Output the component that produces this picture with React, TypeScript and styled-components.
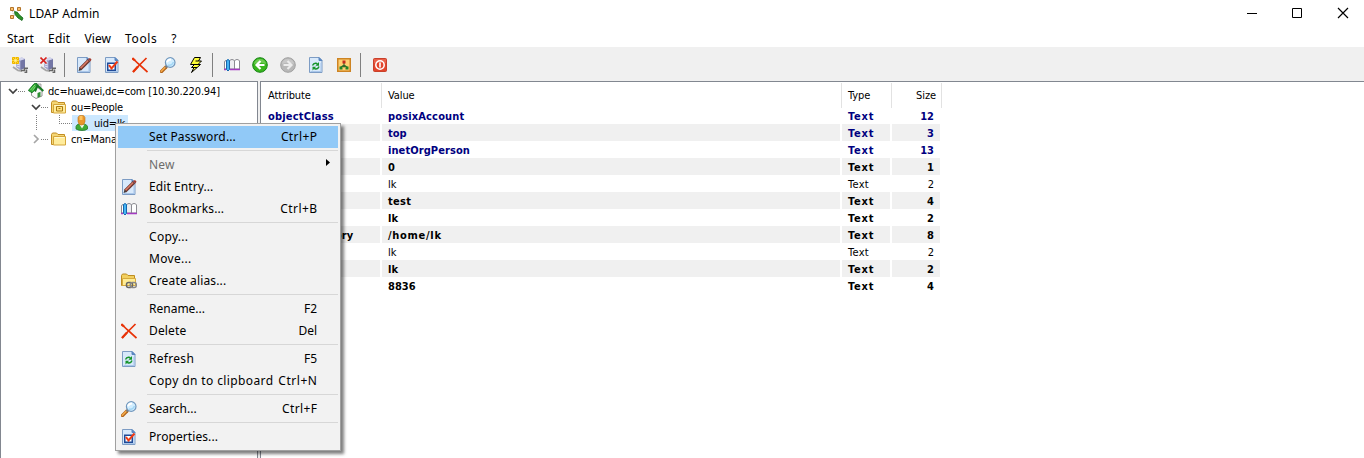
import React from 'react';
import styled, { createGlobalStyle } from 'styled-components';

const GlobalStyle = createGlobalStyle`
  html, body { margin: 0; padding: 0; background: #fff; }
  * { box-sizing: border-box; }
`;

const uiFont = `'Noto Sans', 'Open Sans', sans-serif`;
const gridFont = `'DejaVu Sans Condensed', 'DejaVu Sans', sans-serif`;

const Window = styled.div`
  position: relative;
  width: 1364px;
  height: 458px;
  overflow: hidden;
  display: flex;
  flex-direction: column;
  background: #fff;
  color: #000;
  font: 12px/16px ${uiFont};
  white-space: pre;
`;

const TitleBar = styled.header`
  display: flex;
  align-items: center;
  height: 28px;
  padding: 0 11px 0 9px;
`;

const TitleText = styled.div`
  flex: 1;
  margin-left: 4px;
  letter-spacing: 0.1px;
`;

const WindowButtons = styled.div`
  display: flex;
  gap: 30px;
  svg { display: block; }
`;

const MenuBar = styled.nav`
  display: flex;
  align-items: center;
  gap: 14px;
  height: 19px;
  padding: 2px 0 0 7px;
`;

const MenuTitle = styled.span<{ $ls?: number }>`
  letter-spacing: ${(p) => p.$ls ?? 0}px;
  line-height: 17px;
`;

const ToolBar = styled.div`
  display: flex;
  align-items: center;
  height: 34px;
  padding: 2px 0 0 6px;
  background: #f0f0f0;
`;

const ToolButton = styled.div`
  display: flex;
  justify-content: center;
  width: 28px;
`;

const ToolSeparator = styled.div`
  width: 8px;
  height: 24px;
  padding-left: 2px;
  &::before {
    content: '';
    display: block;
    width: 1px;
    height: 24px;
    background: #808080;
  }
`;

const Panes = styled.main`
  display: flex;
  flex: 1;
  gap: 2px;
  background: #f0f0f0;
`;

const TreePane = styled.section`
  width: 258px;
  padding: 1px 0 0;
  border: solid #828790;
  border-width: 1px 1px 0 1px;
  background: #fff;
  font: 11px/16px ${gridFont};
`;

const TreeRow = styled.div<{ $indent: number }>`
  display: flex;
  align-items: center;
  height: 16px;
  padding-left: ${(p) => p.$indent}px;
`;

const TreeLabel = styled.span<{ $selected?: boolean }>`
  display: flex;
  align-items: center;
  height: 16px;
  gap: 4px;
  padding: 0 3px 0 2px;
  background: ${(p) => (p.$selected ? '#cce8ff' : 'transparent')};
`;

const TreeText = styled.span`
  padding-top: 1px;
  letter-spacing: -0.16px;
`;

const ListPane = styled.section`
  flex: 1;
  padding-top: 1px;
  border: solid #828790;
  border-width: 1px 0 0 1px;
  background: #fff;
  font: 11px/17px ${gridFont};
`;

const columns = '120px 460px 50px 50px';

const HeaderRow = styled.div`
  display: grid;
  grid-template-columns: ${columns};
  height: 24px;
  margin-left: 1px;
`;

const HeaderCell = styled.div<{ $right?: boolean }>`
  padding: 0 5px 0 6px;
  line-height: 25px;
  border-right: 1px solid #e2e2e2;
  text-align: ${(p) => (p.$right ? 'right' : 'left')};
  letter-spacing: -0.1px;
`;

const ListRow = styled.div<{ $kind: Kind }>`
  display: grid;
  grid-template-columns: ${columns};
  height: 17px;
  margin-left: 1px;
  font-weight: ${(p) => (p.$kind === 'optional' ? 400 : 700)};
  color: ${(p) => (p.$kind === 'class' ? '#000080' : '#000')};
  &:nth-child(odd) > div { background: #f0f0f0; }
`;

const Cell = styled.div<{ $right?: boolean; $ls?: number }>`
  margin-right: 2px;
  padding: 0 6px;
  line-height: 19px;
  height: 17px;
  text-align: ${(p) => (p.$right ? 'right' : 'left')};
  letter-spacing: ${(p) => p.$ls ?? 0}px;
`;

const ContextMenu = styled.div`
  position: absolute;
  left: 115px;
  top: 123px;
  width: 226px;
  height: 328px;
  padding: 2px;
  border: 1px solid #a0a0a0;
  background: #f2f2f2;
  box-shadow: 3px 3px 3px rgba(0, 0, 0, 0.5);
`;

const MenuItem = styled.div<{ $active?: boolean; $disabled?: boolean }>`
  display: flex;
  align-items: center;
  height: 22px;
  padding-left: 3px;
  padding-right: 21px;
  background: ${(p) => (p.$active ? '#91c9f7' : 'transparent')};
  color: ${(p) => (p.$disabled ? '#6d6d6d' : '#000')};
`;

const MenuIcon = styled.span`
  width: 28px;
  height: 16px;
  svg { display: block; }
`;

const MenuLabel = styled.span<{ $ls?: number }>`
  flex: 1;
  letter-spacing: ${(p) => p.$ls ?? 0.15}px;
`;

const Shortcut = styled.span<{ $ls?: number }>`
  letter-spacing: ${(p) => p.$ls ?? 0}px;
  margin-right: ${(p) => -(p.$ls ?? 0)}px;
`;

const SubmenuArrow = styled.svg`
  display: block;
  margin: -4px -14px 0 0;
`;

const MenuSeparator = styled.div`
  height: 6px;
  padding: 2px 0 0 29px;
  &::before {
    content: '';
    display: block;
    height: 1px;
    background: #d7d7d7;
  }
`;

const Icon = ({ children }: { children: React.ReactNode }) => (
  <svg width="16" height="16" viewBox="0 0 16 16" fill="none">{children}</svg>
);

const Page = () => (
  <>
    <path d="M1.500.500h9.500l3 3v12h-12.500z" fill="#d8e9fb" stroke="#7d9cc4" />
    <path d="M2.500 14.500h10.500V6" stroke="#a9c6ea" />
    <path d="M11 .500v3h3z" fill="#5b86c0" stroke="#5b86c0" />
  </>
);

const Server = () => (
  <>
    <path d="M4 2l6-1.500 3 1.500v9l-5 2-4-3z" fill="#a3a5cc" />
    <path d="M8.500 3.500L13 2v9l-4.500 2z" fill="#7376a5" />
    <path d="M4 2l6-1.500L13 2l-4.500 1.500z" fill="#d3d5ee" />
    <path d="M4.500 5l3.500 1M4.500 7l3.500 1M4.500 9l3.500 1" stroke="#dfe2f6" />
    <path d="M1 10l5 3.500 4 .5" stroke="#a6a6a6" strokeWidth="1.800" />
    <path d="M9 13.500h3.500v-2.200H16M12.500 15.500h2v-3" stroke="#666" strokeWidth="1.500" />
  </>
);

const ConnectIcon = () => (
  <Icon>
    <Server />
    <path d="M0 0h7v7H0z" fill="#eeb400" />
    <path d="M3.500 0v7M0 3.500h7M.5.5l6 6M6.500.5l-6 6" stroke="#ffd93b" />
    <path d="M2.500 2.500h2v2h-2z" fill="#fff3a0" />
  </Icon>
);

const DisconnectIcon = () => (
  <Icon>
    <Server />
    <path d="M0 .5h7v6H0z" fill="#f0f0f0" opacity=".7" />
    <path d="M.5.5l6 6M6.500.5l-6 6" stroke="#d8201c" strokeWidth="1.600" />
  </Icon>
);

const EditIcon = () => (
  <Icon>
    <Page />
    <path d="M4.200 12L13 3.200" stroke="#6d352d" strokeWidth="3.400" />
    <path d="M4.500 11.200L12.200 3.500" stroke="#d97a66" strokeWidth="1.600" />
    <path d="M12 2l2-1 1.500 1.500-1 2z" fill="#a33d32" />
    <path d="M2.500 14l1-3.200 2.300 2.200z" fill="#413c3c" />
  </Icon>
);

const PropertiesIcon = () => (
  <Icon>
    <Page />
    <path d="M3.750 6.250h7.500v7h-7.500z" fill="#fff" stroke="#1f4a98" strokeWidth="1.500" />
    <path d="M5 8l2.500 3.500L13.500 4.500" stroke="#f03a12" strokeWidth="2" />
  </Icon>
);

const DeleteIcon = () => (
  <Icon>
    <path d="M.5 1l5.500 5.500L15.500 15" stroke="#e83308" strokeWidth="1.700" />
    <path d="M.3 1.300L3 3.500" stroke="#e83308" strokeWidth="2.200" />
    <path d="M14.500 1L7.500 8 1 15" stroke="#e83308" strokeWidth="1.700" />
    <path d="M6 9.500L1 15" stroke="#e83308" strokeWidth="2.200" />
  </Icon>
);

const SearchIcon = () => (
  <Icon>
    <path d="M6 10L1.500 14.500" stroke="#b2641b" strokeWidth="3.200" strokeLinecap="round" />
    <path d="M5.500 10L1.300 14.200" stroke="#f6ac4a" strokeWidth="1.600" strokeLinecap="round" />
    <path d="M6.800 9.200L5.500 10.500" stroke="#777" strokeWidth="2.200" />
    <circle cx="10.200" cy="5.500" r="4.800" fill="#d2eeff" stroke="#7197bd" strokeWidth="1.200" />
    <path d="M7 5.200Q8 2.500 11 2.500" stroke="#fff" strokeWidth="1.800" />
    <path d="M8 8Q12 9 13.500 5" stroke="#a1d6f5" strokeWidth="1.400" />
  </Icon>
);

const LightningIcon = () => (
  <Icon>
    <path d="M6.500.5h6l-2 3.500h3L10 7.500h2.500L3.500 15.500l2.500-5H3.500l3-3H2.500z" fill="#ffff38" stroke="#000" strokeLinejoin="bevel" />
    <path d="M6 7.500h4M10.500 4h-3M6 10.500h3" stroke="#000" />
  </Icon>
);

const BookIcon = () => (
  <Icon>
    <path d="M.5 12V5q0-1.500 2-1.500V12z" fill="#fff" stroke="#8b8b91" />
    <path d="M5.500 12V4q.5-1.500 2.500-1.500T10.500 4v8z" fill="#ededf0" stroke="#8b8b91" />
    <path d="M10.500 12V4q.5-1.500 2.500-1.500T15.500 4v8z" fill="#fff" stroke="#8b8b91" />
    <path d="M2.500 3.500q1.500-2 3 0v9L4 14l-1.500-1.500z" fill="#45b4f2" stroke="#1566ae" />
    <path d="M0 12.500h2M6 12.500h10" stroke="#a53ac2" strokeWidth="1.600" />
  </Icon>
);

const ArrowIcon = ({ disabled, back }: { disabled?: boolean; back?: boolean }) => (
  <Icon>
    <circle cx="8" cy="8" r="7.300" fill={disabled ? '#b8b8b8' : '#38b51d'} stroke={disabled ? '#a0a0a0' : '#168514'} />
    <path d="M2 7a6 5 0 0 1 12 0q-6-3-12 0" fill={disabled ? '#c8c8c8' : '#6bcb50'} />
    <path
      d={back ? 'M12.500 8H5M8.500 4L4.500 8l4 4' : 'M3.500 8H11M7.500 4l4 4-4 4'}
      stroke={disabled ? '#ececec' : '#fff'}
      strokeWidth="2.200"
    />
  </Icon>
);

const RefreshIcon = () => (
  <Icon>
    <Page />
    <path d="M4.500 8.500q1-2.500 3.500-2.200l1.500.7M11 9.500q-1 2.700-3.500 2.500L6 11.300" stroke="#16942b" strokeWidth="1.400" />
    <path d="M11 5v3.700H7.500z" fill="#16942b" />
    <path d="M4.500 13.500V9.800h3.700z" fill="#16942b" />
  </Icon>
);

const SchemaIcon = () => (
  <Icon>
    <path d="M1.750 1.750h12.500v12.500H1.750z" fill="#ffcf72" stroke="#cd8423" strokeWidth="1.500" />
    <path d="M8 5v3M4.500 10.500L8 8l3.500 2.500M8 8v2.500" stroke="#35692b" strokeWidth="1.200" />
    <path d="M6.500 3.500h3v3h-3z" fill="#c22b1e" />
    <path d="M3.500 9.500h3v3h-3zM9.500 9.500h3v3h-3z" fill="#218426" />
  </Icon>
);

const ExitIcon = () => (
  <Icon>
    <rect x="1.500" y="1.500" width="13" height="13" rx="1" fill="#e2452c" stroke="#c9402a" />
    <path d="M2 2h12v4H2z" fill="#ea6049" />
    <circle cx="8" cy="8" r="4.200" stroke="#fff" strokeWidth="1.500" />
    <path d="M8 5.500v5" stroke="#fff" strokeWidth="1.600" />
  </Icon>
);

const FolderShape = () => (
  <>
    <path d="M.5 3.500l1-1.500h4l1.500 1.500h6.500v10H.5z" fill="#f4d675" stroke="#c18c22" />
    <path d="M2.500 5.500h12v8.500h-12z" fill="#ffec9c" stroke="#d5a63a" />
    <path d="M3.500 6.500h10" stroke="#fff8cf" />
  </>
);

const FolderIcon = () => <Icon><FolderShape /></Icon>;

const UnitIcon = () => (
  <Icon>
    <FolderShape />
    <path d="M5.500 7.500h6v4.500h-6z" fill="#ffe17a" stroke="#a97b14" />
    <path d="M7.500 9.500h2" stroke="#a97b14" />
  </Icon>
);

const AliasIcon = () => (
  <Icon>
    <path d="M.5 2.500l1-1.500h4l1.500 1.500h6.500v10H.5z" fill="#f2cf5e" stroke="#bd8c1f" />
    <path d="M1.500 5.500h13v7h-13z" fill="#ffec94" stroke="#d6aa3e" />
    <rect x="5.500" y="9.500" width="6" height="5" rx="2" stroke="#666" strokeWidth="1.500" />
    <rect x="9.300" y="9.500" width="6" height="5" rx="2" stroke="#888" strokeWidth="1.500" />
  </Icon>
);

const HomeIcon = () => (
  <Icon>
    <path d="M10 1h3v4h-3z" fill="#e4e4e4" stroke="#8a8a8a" strokeWidth=".7" />
    <path d="M3.500 8v4.500L8 15.500l6-2.500V8L9 4z" fill="#fafafa" stroke="#777" strokeWidth=".8" />
    <path d="M9.500 10l3-1.200v4.800l-3 1.200z" fill="#2f8f35" />
    <path d="M.3 7.500L6 .8 9 .3 7 7 4 9.800z" fill="#2fae35" stroke="#0b681a" strokeWidth=".8" />
    <path d="M7 8.500L9.500 2.500 15.300 8" stroke="#157a22" strokeWidth="2" />
    <path d="M2.500 7l4.500-5M4.500 7.500l3-4" stroke="#85e076" />
  </Icon>
);

const UserIcon = () => (
  <Icon>
    <path d="M2 14v-2.500q.5-2 3-2.500h5q3 .5 3.500 2.500V14q-2 1.500-5.500 1.500T2 14z" fill="#3eab35" stroke="#257728" strokeWidth=".8" />
    <path d="M5.500 9.500L8 13.500l2.500-4z" fill="#f4f4e8" />
    <path d="M4 2.500Q4.500.3 7.500.3T11 2.500v4Q10.500 10 7.500 10T4 6.500z" fill="#e9962c" stroke="#c0731a" strokeWidth=".6" />
    <path d="M5.500 2h3M5.500 4h3" stroke="#ffc45e" strokeWidth="1.800" />
  </Icon>
);

const AppIcon = () => (
  <Icon>
    <path d="M3 3l2 8M4 3l9 9M11 3L4 11" stroke="#b9b9b9" strokeDasharray="1 1" />
    <path d="M1.500 1.500h3v3h-3zM8.500 1.500h3v3h-3zM1.500 9.500h3v3h-3z" fill="#f9bf6a" stroke="#b3742a" />
    <path d="M5.500 5.500q3.500 0 4.500 3l4 3.500-1 2.500-4-2.500-3-3.500z" fill="#2c9028" stroke="#116416" strokeWidth=".8" />
  </Icon>
);

const Expander = ({ open }: { open: boolean }) => (
  <svg width="10" height="10" viewBox="0 0 10 10" fill="none">
    <path d={open ? 'M1 3l4 4 4-4' : 'M3 1l4 4-4 4'} stroke={open ? '#404040' : '#a6a6a6'} strokeWidth="1.700" />
  </svg>
);

const Dots = ({ width, corner }: { width: number; corner?: boolean }) => (
  <svg width={width} height="16" fill="none" shapeRendering="crispEdges">
    <path d={corner ? `M.5 0v8M0 8.500h${width}` : `M0 8.500h${width}`} stroke="#808080" strokeDasharray="1 1" />
  </svg>
);

const Guide = styled.svg`
  margin-right: 22px;
`;

type Kind = 'class' | 'required' | 'optional';

const entries: [string, string, string, Kind, number?][] = [
  ['objectClass', 'posixAccount', '12', 'class', 0.15],
  ['', 'top', '3', 'class'],
  ['', 'inetOrgPerson', '13', 'class', 0.08],
  ['gidNumber', '0', '1', 'required'],
  ['givenName', 'lk', '2', 'optional'],
  ['sn', 'test', '4', 'required', 0.3],
  ['cn', 'lk', '2', 'required'],
  ['homeDirectory', '/home/lk', '8', 'required', 0.7],
  ['initials', 'lk', '2', 'optional'],
  ['uid', 'lk', '2', 'required'],
  ['uidNumber', '8836', '4', 'required'],
];

type Item = {
  label: string;
  ls?: number;
  keys?: string;
  kls?: number;
  icon?: React.ReactNode;
  active?: boolean;
  disabled?: boolean;
};

const menuGroups: Item[][] = [
  [{ label: 'Set Password...', keys: 'Ctrl+P', kls: 0.4, active: true }],
  [
    { label: 'New', disabled: true },
    { label: 'Edit Entry...', ls: 0.08, icon: <EditIcon /> },
    { label: 'Bookmarks...', keys: 'Ctrl+B', kls: 0.4, icon: <BookIcon /> },
  ],
  [
    { label: 'Copy...', ls: 0.3 },
    { label: 'Move...', ls: 0.3 },
    { label: 'Create alias...', icon: <AliasIcon /> },
  ],
  [
    { label: 'Rename...', ls: 0, keys: 'F2' },
    { label: 'Delete', keys: 'Del', icon: <DeleteIcon /> },
  ],
  [
    { label: 'Refresh', ls: 0.3, keys: 'F5', icon: <RefreshIcon /> },
    { label: 'Copy dn to clipboard', ls: 0.39, keys: 'Ctrl+N', kls: 0.55 },
  ],
  [{ label: 'Search...', ls: 0, keys: 'Ctrl+F', kls: 0.4, icon: <SearchIcon /> }],
  [{ label: 'Properties...', ls: 0.08, icon: <PropertiesIcon /> }],
];

const menuTitles: [string, number][] = [
  ['Start', 0],
  ['Edit', 0.25],
  ['View', 0.1],
  ['Tools', 0.6],
  ['?', 0],
];

const toolGroups: React.ReactNode[][] = [
  [<ConnectIcon />, <DisconnectIcon />],
  [<EditIcon />, <PropertiesIcon />, <DeleteIcon />, <SearchIcon />, <LightningIcon />],
  [<BookIcon />, <ArrowIcon back />, <ArrowIcon disabled />, <RefreshIcon />, <SchemaIcon />],
  [<ExitIcon />],
];

export default function App() {
  return (
    <Window>
      <GlobalStyle />
      <TitleBar>
        <AppIcon />
        <TitleText>LDAP Admin</TitleText>
        <WindowButtons>
          <svg width="16" height="16"><path d="M2 7.500h10" stroke="#000" /></svg>
          <svg width="16" height="16" fill="none"><path d="M1.500 2.500h9v9h-9z" stroke="#000" /></svg>
          <svg width="16" height="16"><path d="M1 2l10 10M11 2L1 12" stroke="#000" strokeWidth="1.200" /></svg>
        </WindowButtons>
      </TitleBar>
      <MenuBar>
        {menuTitles.map(([t, ls]) => <MenuTitle key={t} $ls={ls}>{t}</MenuTitle>)}
      </MenuBar>
      <ToolBar>
        {toolGroups.map((group, g) => (
          <React.Fragment key={g}>
            {g > 0 && <ToolSeparator />}
            {group.map((icon, i) => <ToolButton key={i}>{icon}</ToolButton>)}
          </React.Fragment>
        ))}
      </ToolBar>
      <Panes>
        <TreePane>
          <TreeRow $indent={7}>
            <Expander open /><Dots width={8} />
            <TreeLabel><HomeIcon /><TreeText>dc=huawei,dc=com [10.30.220.94]</TreeText></TreeLabel>
          </TreeRow>
          <TreeRow $indent={30}>
            <Expander open /><Dots width={8} />
            <TreeLabel><UnitIcon /><TreeText>ou=People</TreeText></TreeLabel>
          </TreeRow>
          <TreeRow $indent={35}>
            <Guide width="1" height="16"><path d="M.5 0v16" stroke="#808080" strokeDasharray="1 1" /></Guide>
            <Dots width={13} corner />
            <TreeLabel $selected><UserIcon /><TreeText>uid=lk</TreeText></TreeLabel>
          </TreeRow>
          <TreeRow $indent={30}>
            <Expander open={false} /><Dots width={8} />
            <TreeLabel><FolderIcon /><TreeText>cn=Manager</TreeText></TreeLabel>
          </TreeRow>
        </TreePane>
        <ListPane>
          <HeaderRow>
            <HeaderCell>Attribute</HeaderCell>
            <HeaderCell>Value</HeaderCell>
            <HeaderCell>Type</HeaderCell>
            <HeaderCell $right>Size</HeaderCell>
          </HeaderRow>
          {entries.map(([name, value, size, kind, ls], i) => (
            <ListRow key={i} $kind={kind}>
              <Cell $ls={0.2}>{name}</Cell>
              <Cell $ls={ls}>{value}</Cell>
              <Cell $ls={kind === 'optional' ? 0.3 : 0.8}>Text</Cell>
              <Cell $right>{size}</Cell>
            </ListRow>
          ))}
        </ListPane>
      </Panes>
      <ContextMenu>
        {menuGroups.map((group, g) => (
          <React.Fragment key={g}>
            {g > 0 && <MenuSeparator />}
            {group.map((item) => (
              <MenuItem key={item.label} $active={item.active} $disabled={item.disabled}>
                <MenuIcon>{item.icon}</MenuIcon>
                <MenuLabel $ls={item.ls}>{item.label}</MenuLabel>
                {item.keys && <Shortcut $ls={item.kls}>{item.keys}</Shortcut>}
                {item.disabled && (
                  <SubmenuArrow width="7" height="8"><path d="M2 0l4 3.500-4 3.500z" fill="#000" /></SubmenuArrow>
                )}
              </MenuItem>
            ))}
          </React.Fragment>
        ))}
      </ContextMenu>
    </Window>
  );
}
